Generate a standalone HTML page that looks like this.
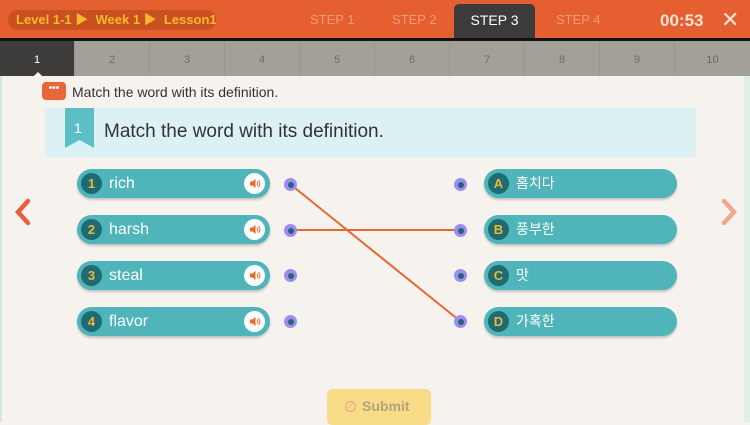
<!DOCTYPE html><html><head><style>
*{margin:0;padding:0;box-sizing:border-box}
body{width:750px;height:422px;overflow:hidden;background:#f6f3ef;font-family:"Liberation Sans","Noto Sans CJK KR",sans-serif;position:relative}
.a{position:absolute}
.hdr{left:0;top:0;width:750px;height:38px;background:#e65f30}
.crumb{left:8px;top:10px;width:208px;height:20px;border-radius:10px;background:#c9501f;color:#f9b830;font-weight:bold;font-size:13px;line-height:20px;padding-left:8px;white-space:nowrap}
.st{top:12px;color:#f29a78;font-size:13px}
.tab3{left:454px;top:4px;width:81px;height:36px;background:#3d3b39;border-radius:5px 5px 0 0;color:#fff;font-size:14px;text-align:center;line-height:32px}
.nb{left:0;top:38px;width:750px;height:38px;background:#a39f99;border-top:3px solid #111}
.nb div{position:absolute;top:0;height:35px;width:75px;text-align:center;line-height:38px;color:#6d6a66;font-size:11px;border-right:1px solid #98948e}
.pill{height:29px;border-radius:15px;background:#4fb5bb;box-shadow:0 2px 2px rgba(0,0,0,.2);color:#fff;font-size:16px;line-height:29px}
.num{position:absolute;left:4px;top:4px;width:21px;height:21px;border-radius:50%;background:#1e6b74;color:#f2b631;font-size:13px;font-weight:bold;text-align:center;line-height:21px}
.txt{position:absolute;left:32px;top:0}
.spk{position:absolute;right:5px;top:4px;width:21px;height:21px;border-radius:50%;background:#fff}
.dot{width:13px;height:13px;border-radius:50%;background:#9a8ff0}
.dot::after{content:"";position:absolute;left:3.5px;top:3.5px;width:6px;height:6px;border-radius:50%;background:#2c5f7a}
</style></head><body>
<div class="a hdr"></div>
<div class="a crumb">Level 1-1 ▶ &nbsp;Week 1 ▶ &nbsp;Lesson1</div>
<div class="a st" style="left:310px">STEP 1</div>
<div class="a st" style="left:392px">STEP 2</div>
<div class="a tab3">STEP 3</div>
<div class="a st" style="left:556px">STEP 4</div>
<div class="a" style="left:660px;top:11px;color:#fbe3d6;font-weight:bold;font-size:17px">00:53</div>
<div class="a" style="left:721px;top:7px;color:#fbe3d6;font-size:22px">✕</div>
<div class="a nb">
<div style="left:0;background:#3f3d3b;color:#fff">1</div><div style="left:75px">2</div><div style="left:150px">3</div><div style="left:225px">4</div><div style="left:300px">5</div><div style="left:375px">6</div><div style="left:450px">7</div><div style="left:525px">8</div><div style="left:600px">9</div><div style="left:675px;border:0">10</div>
</div>
<div class="a" style="left:34px;top:68px;width:0;height:0;border:4px solid transparent;border-bottom-color:#fff"></div>
<div class="a" style="left:0;top:76px;width:2px;height:346px;background:#cfe8e2"></div>
<div class="a" style="left:744px;top:76px;width:6px;height:346px;background:#e3eee9"></div>
<div class="a" style="left:42px;top:82px;width:24px;height:18px;border-radius:4px;background:#e8663a;color:#fff;font-size:10px;text-align:center;line-height:14px;font-weight:bold">•••</div>
<div class="a" style="left:72px;top:84px;color:#333;font-size:14px">Match the word with its definition.</div>
<div class="a" style="left:45px;top:108px;width:651px;height:49px;background:#dcf1f3"></div>
<svg class="a" style="left:65px;top:108px" width="29" height="40"><path d="M0 0H29V40L14.5 32L0 40Z" fill="#5cbfc6"/></svg>
<div class="a" style="left:74px;top:120px;color:#fff;font-size:14px">1</div>
<div class="a" style="left:104px;top:121px;color:#333;font-size:19px">Match the word with its definition.</div>
<svg class="a" style="left:10px;top:198px" width="24" height="28"><path d="M18 3L8 14L18 25" stroke="#e5603a" stroke-width="4.5" fill="none" stroke-linecap="round"/></svg>
<svg class="a" style="left:716px;top:198px" width="24" height="28"><path d="M8 3L18 14L8 25" stroke="#f0a88d" stroke-width="4.5" fill="none" stroke-linecap="round"/></svg>
<svg class="a" style="left:0;top:0" width="750" height="422"><path d="M290 184L460 321M290 230H460" stroke="#e8672f" stroke-width="2"/></svg>
<div class="a pill" style="left:77px;top:169px;width:193px"><div class="num">1</div><div class="txt">rich</div><div class="spk"><svg width="21" height="21"><path d="M6 8.5h2.5l3-2.5v9l-3-2.5H6z" fill="#ea6a2e"/><path d="M13 8.5q1.5 2 0 4M14.5 7q2.8 3.5 0 7" stroke="#ea6a2e" fill="none"/></svg></div></div>
<div class="a pill" style="left:77px;top:215px;width:193px"><div class="num">2</div><div class="txt">harsh</div><div class="spk"><svg width="21" height="21"><path d="M6 8.5h2.5l3-2.5v9l-3-2.5H6z" fill="#ea6a2e"/><path d="M13 8.5q1.5 2 0 4M14.5 7q2.8 3.5 0 7" stroke="#ea6a2e" fill="none"/></svg></div></div>
<div class="a pill" style="left:77px;top:261px;width:193px"><div class="num">3</div><div class="txt">steal</div><div class="spk"><svg width="21" height="21"><path d="M6 8.5h2.5l3-2.5v9l-3-2.5H6z" fill="#ea6a2e"/><path d="M13 8.5q1.5 2 0 4M14.5 7q2.8 3.5 0 7" stroke="#ea6a2e" fill="none"/></svg></div></div>
<div class="a pill" style="left:77px;top:307px;width:193px"><div class="num">4</div><div class="txt">flavor</div><div class="spk"><svg width="21" height="21"><path d="M6 8.5h2.5l3-2.5v9l-3-2.5H6z" fill="#ea6a2e"/><path d="M13 8.5q1.5 2 0 4M14.5 7q2.8 3.5 0 7" stroke="#ea6a2e" fill="none"/></svg></div></div>
<div class="a dot" style="left:284px;top:178px"></div><div class="a dot" style="left:284px;top:224px"></div><div class="a dot" style="left:284px;top:269px"></div><div class="a dot" style="left:284px;top:315px"></div>
<div class="a dot" style="left:454px;top:178px"></div><div class="a dot" style="left:454px;top:224px"></div><div class="a dot" style="left:454px;top:269px"></div><div class="a dot" style="left:454px;top:315px"></div>
<div class="a pill" style="left:484px;top:169px;width:193px"><div class="num">A</div><div class="txt" style="font-size:14px">홈치다</div></div>
<div class="a pill" style="left:484px;top:215px;width:193px"><div class="num">B</div><div class="txt" style="font-size:14px">풍부한</div></div>
<div class="a pill" style="left:484px;top:261px;width:193px"><div class="num">C</div><div class="txt" style="font-size:14px">맛</div></div>
<div class="a pill" style="left:484px;top:307px;width:193px"><div class="num">D</div><div class="txt" style="font-size:14px">가혹한</div></div>
<div class="a" style="left:327px;top:389px;width:104px;height:36px;border-radius:5px;background:#f8dc87;color:#b4a27a;font-weight:bold;font-size:14px;line-height:34px;padding-left:35px">Submit</div>
<div class="a" style="left:345px;top:401px;width:11px;height:11px;border-radius:50%;border:1.5px solid #eda57a;color:#eda57a;font-size:8px;line-height:8px;text-align:center">✓</div>
</body></html>
